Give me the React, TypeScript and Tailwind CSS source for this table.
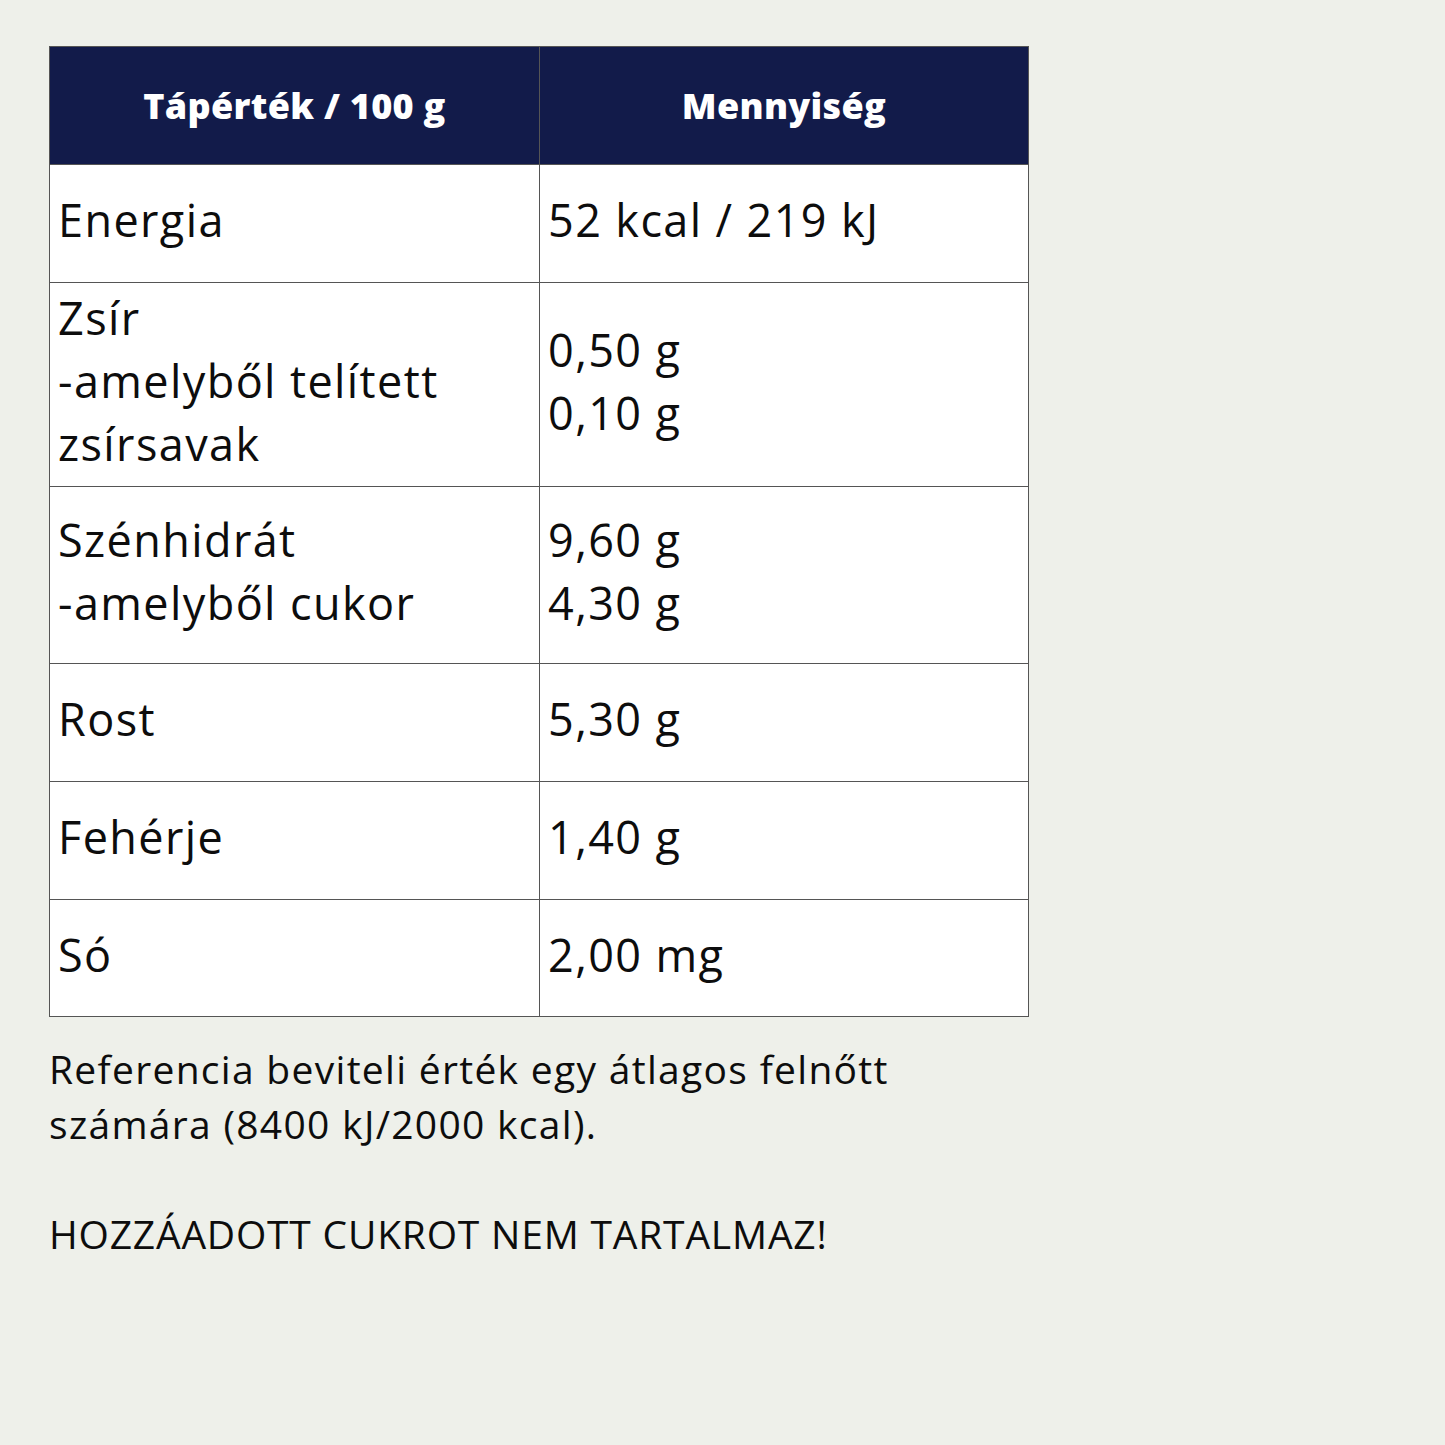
const rows: [string[], string[]][] = [
  [["Energia"], ["52 kcal / 219 kJ"]],
  [["Zsír", "-amelyből telített", "zsírsavak"], ["0,50 g", "0,10 g"]],
  [["Szénhidrát", "-amelyből cukor"], ["9,60 g", "4,30 g"]],
  [["Rost"], ["5,30 g"]],
  [["Fehérje"], ["1,40 g"]],
  [["Só"], ["2,00 mg"]],
];

const heights = ["h-[118px]", "h-[204px]", "h-[177px]", "h-[118px]", "h-[118px]", "h-[117px]"];

export default function App() {
  return (
    <div
      className="min-h-[1445px] w-[1445px] bg-[#eef0ea] pl-[49px] pt-[46px] text-[#0d0d0d]"
      style={{ fontFamily: '"Open Sans", "Noto Sans", sans-serif' }}
    >
      <table className="w-[980px] table-fixed border-collapse border border-[#555]">
        <thead>
          <tr className="h-[118px] bg-[#121b4a] text-white">
            <th className="w-[490px] border border-[#555] text-[36px] font-extrabold tracking-[0.3px]">
              Tápérték / 100 g
            </th>
            <th className="border border-[#555] text-[36px] font-extrabold tracking-[0.3px]">
              Mennyiség
            </th>
          </tr>
        </thead>
        <tbody className="bg-white">
          {rows.map(([left, right], i) => (
            <tr key={i} className={heights[i]}>
              <td className="border border-[#555] px-2 pb-[8px] align-middle text-[45px] font-medium leading-[63px] tracking-[1.4px]">
                {left.map((l) => (
                  <div key={l}>{l}</div>
                ))}
              </td>
              <td className="border border-[#555] px-2 pb-[8px] align-middle text-[45px] font-medium leading-[63px] tracking-[1.4px]">
                {right.map((l) => (
                  <div key={l}>{l}</div>
                ))}
              </td>
            </tr>
          ))}
        </tbody>
      </table>
      <p className="mt-[24px] w-[900px] text-[39px] font-medium leading-[55px] tracking-[1.3px]">
        Referencia beviteli érték egy átlagos felnőtt
        <br />
        számára (8400 kJ/2000 kcal).
      </p>
      <p className="mt-[55px] text-[39px] font-medium leading-[55px] tracking-[0.8px]">
        HOZZÁADOTT CUKROT NEM TARTALMAZ!
      </p>
    </div>
  );
}
